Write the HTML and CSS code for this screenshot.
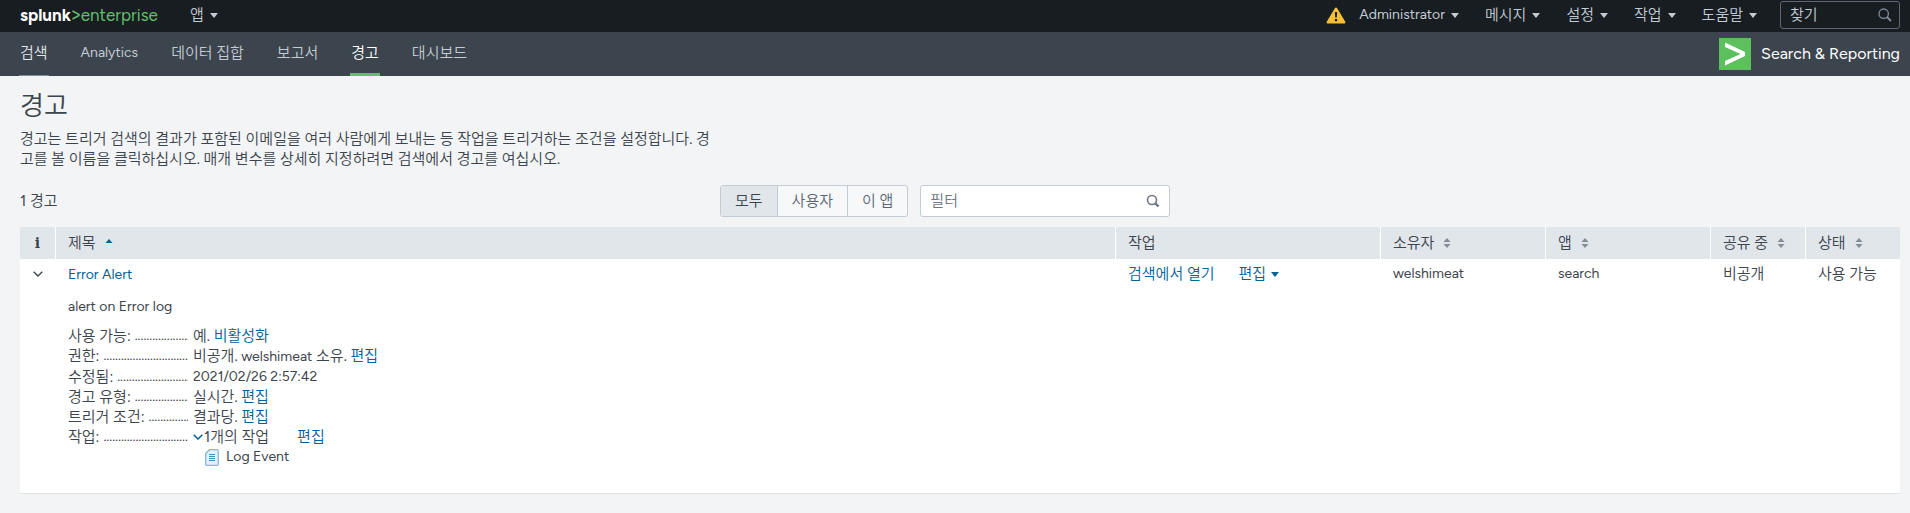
FILE: index.html
```html
<!DOCTYPE html>
<html lang="ko">
<head>
<meta charset="utf-8">
<title>경고 | Splunk</title>
<link rel="stylesheet" href="styles.css">
</head>
<body>
<header class="topbar">
  <a class="logo" href="#" aria-label="splunk enterprise"><span class="logo-name">splunk</span><svg class="logo-mark" width="8" height="10" viewBox="0 0 8 10"><path d="M.5 1 7 4.500v1L.5 9" fill="none" stroke="currentColor" stroke-width="1.500"/></svg><span class="logo-product">enterprise</span></a>
  <button class="menu" type="button">앱<span class="caret"></span></button>
  <nav class="top-menus">
    <svg class="warning" width="20" height="17" viewBox="0 0 20 17"><path d="M10 .5Q10.800.5 11.300 1.400L19.300 14.800Q20 16.500 18.500 16.500H1.500Q0 16.500.7 14.800L8.700 1.400Q9.200.5 10 .5Z" fill="#f8be34"/><path d="M8.800 5h2.400l-.4 5.500H9.200ZM8.900 12h2.200v2.200H8.900Z" fill="#1a1c20"/></svg>
    <button class="menu menu-latin" type="button">Administrator<span class="caret"></span></button>
    <button class="menu" type="button">메시지<span class="caret"></span></button>
    <button class="menu" type="button">설정<span class="caret"></span></button>
    <button class="menu" type="button">작업<span class="caret"></span></button>
    <button class="menu" type="button">도움말<span class="caret"></span></button>
  </nav>
  <label class="find">
    <input type="text" placeholder="찾기" aria-label="찾기">
    <svg width="14" height="14" viewBox="0 0 14 14" fill="none" stroke="currentColor"><circle cx="5.700" cy="5.700" r="4.700" stroke-width="1.300"/><path d="m9 9 4 4" stroke-width="2"/></svg>
  </label>
</header>
<nav class="appbar">
  <div class="tabs">
    <a class="tab tab-home" href="#">검색</a>
    <a class="tab tab-latin" href="#">Analytics</a>
    <a class="tab" href="#">데이터 집합</a>
    <a class="tab" href="#">보고서</a>
    <a class="tab tab-active" href="#" aria-current="page">경고</a>
    <a class="tab" href="#">대시보드</a>
  </div>
  <a class="app" href="#"><svg width="32" height="32" viewBox="0 0 32 32"><path fill="#5cc05c" d="M0 0h32v32H0z"/><path d="M6 4.500 26 14v4L6 27.500V23l15.500-7L6 9Z" fill="#fff"/></svg>Search &amp; Reporting</a>
</nav>
<main class="page">
  <h1>경고</h1>
  <p class="intro">경고는 트리거 검색의 결과가 포함된 이메일을 여러 사람에게 보내는 등 작업을 트리거하는 조건을 설정합니다. 경고를 볼 이름을 클릭하십시오. 매개 변수를 상세히 지정하려면 검색에서 경고를 여십시오.</p>
  <div class="toolbar">
    <div class="count">1 경고</div>
    <div class="segments">
      <button class="segment segment-on" type="button" aria-pressed="true">모두</button>
      <button class="segment" type="button">사용자</button>
      <button class="segment" type="button">이 앱</button>
    </div>
    <label class="filter">
      <input type="text" placeholder="필터" aria-label="필터">
      <svg width="14" height="14" viewBox="0 0 14 14" fill="none" stroke="currentColor"><circle cx="6" cy="6" r="4.500" stroke-width="1.600"/><path d="m9.200 9.200 3.300 3.300" stroke-width="2.400"/></svg>
    </label>
  </div>
  <table class="alerts">
    <colgroup><col class="col-info"><col><col class="col-actions"><col class="col-owner"><col class="col-owner"><col class="col-state"><col class="col-state"></colgroup>
    <thead>
      <tr>
        <th class="info">i</th>
        <th>제목<svg class="sort sort-up" width="8" height="10" viewBox="0 0 8 10"><path d="m.5 5 3.500-4 3.500 4Z" fill="currentColor"/></svg></th>
        <th>작업</th>
        <th>소유자<svg class="sort" width="8" height="10" viewBox="0 0 8 10"><path d="m.5 4 3.500-4 3.500 4ZM.5 6 4 10l3.500-4Z" fill="currentColor"/></svg></th>
        <th>앱<svg class="sort" width="8" height="10" viewBox="0 0 8 10"><path d="m.5 4 3.500-4 3.500 4ZM.5 6 4 10l3.500-4Z" fill="currentColor"/></svg></th>
        <th>공유 중<svg class="sort" width="8" height="10" viewBox="0 0 8 10"><path d="m.5 4 3.500-4 3.500 4ZM.5 6 4 10l3.500-4Z" fill="currentColor"/></svg></th>
        <th>상태<svg class="sort" width="8" height="10" viewBox="0 0 8 10"><path d="m.5 4 3.500-4 3.500 4ZM.5 6 4 10l3.500-4Z" fill="currentColor"/></svg></th>
      </tr>
    </thead>
    <tbody>
      <tr>
        <td class="toggle"><button type="button" aria-label="접기"><svg width="10" height="6" viewBox="0 0 10 6"><path d="m.7.700 4.300 4.300L9.300.7" fill="none" stroke="currentColor" stroke-width="1.300"/></svg></button></td>
        <td><a class="latin" href="#">Error Alert</a></td>
        <td><div class="actions"><a href="#">검색에서 열기</a><button class="edit" type="button">편집<span class="caret"></span></button></div></td>
        <td class="latin">welshimeat</td>
        <td class="latin">search</td>
        <td>비공개</td>
        <td>사용 가능</td>
      </tr>
      <tr>
        <td></td>
        <td class="detail" colspan="6">
          <p class="summary latin">alert on Error log</p>
          <dl class="facts">
            <dt>사용 가능:</dt><dd>예. <a href="#">비활성화</a></dd>
            <dt>권한:</dt><dd>비공개. <span class="latin">welshimeat</span> 소유. <a href="#">편집</a></dd>
            <dt>수정됨:</dt><dd class="latin">2021/02/26 2:57:42</dd>
            <dt>경고 유형:</dt><dd>실시간. <a href="#">편집</a></dd>
            <dt>트리거 조건:</dt><dd>결과당. <a href="#">편집</a></dd>
            <dt>작업:</dt>
            <dd>
              <div class="action-line"><a href="#" aria-label="접기"><svg width="10" height="6" viewBox="0 0 10 6"><path d="m.7.700 4.300 4.300L9.300.7" fill="none" stroke="currentColor" stroke-width="1.500"/></svg></a><span>1개의 작업</span><a class="action-edit" href="#">편집</a></div>
              <div class="action-item latin"><svg width="14" height="17" viewBox="0 0 14 17"><path d="M4.500.7H12Q13.300.7 13.300 2V15Q13.300 16.300 12 16.300H2Q.7 16.300.7 15V4.500Z" fill="#e3f2fa" stroke="#7fb9d6" stroke-width="1.300"/><path d="M4 5.500h6M4 7.500h6M4 9.500h6M4 11.500h6" stroke="#3f8fb8"/></svg>Log Event</div>
            </dd>
          </dl>
        </td>
      </tr>
    </tbody>
  </table>
</main>
</body>
</html>
```

FILE: styles.css
```css
* { box-sizing: border-box; }

body {
  margin: 0;
  background: #f2f4f5;
  color: #3c444d;
  font: 15px/20px Figtree, "Proxima Nova", Lato, "Noto Sans CJK KR DemiLight", "Noto Sans CJK KR", sans-serif;
  font-weight: 400;
}

a { color: #006297; text-decoration: none; }
button, input { font: inherit; color: inherit; }
button { padding: 0; border: 0; background: none; }
svg { display: block; flex: none; }
.latin { font-size: 14px; }

.caret {
  border: 4px solid transparent;
  border-top: 5px solid currentColor;
  border-bottom: 0;
}

.topbar {
  display: flex;
  align-items: center;
  height: 32px;
  padding: 0 10px 2px 20px;
  background: #171d21;
  color: #c3cbd4;
}

.logo {
  display: flex;
  align-items: center;
  gap: 1px;
  margin-right: 32px;
  color: #65be6c;
  font-size: 17px;
}
.logo-name { color: #fff; font-weight: 700; }

.menu {
  display: flex;
  align-items: center;
  gap: 6px;
  height: 24px;
}
.menu-latin { font-size: 14px; }

.top-menus {
  display: flex;
  align-items: center;
  gap: 26px;
  margin-left: auto;
  margin-right: 23px;
}
.warning { margin-right: -13px; }

.find {
  display: flex;
  align-items: center;
  width: 120px;
  height: 28px;
  padding: 0 7px 0 9px;
  border: 1px solid #5c6773;
  border-radius: 3px;
  color: #818d99;
}
.find input, .filter input {
  flex: 1;
  min-width: 0;
  padding: 0;
  border: 0;
  outline: 0;
  background: none;
}
.find input::placeholder { color: #c3cbd4; opacity: 1; }

.appbar {
  display: flex;
  justify-content: space-between;
  height: 44px;
  padding: 0 10px 0 19px;
  background: #3c444d;
}
.tabs { display: flex; gap: 31px; }
.tab {
  padding: 11px 1px 0;
  border-bottom: 3px solid transparent;
  color: #c3cbd4;
}
.tab-home { border-bottom: 1px solid #818d99; color: #e1e6eb; }
.tab-latin { font-size: 14px; }
.tab-active { border-color: #65be6c; color: #fff; }
.app {
  display: flex;
  align-items: center;
  gap: 10px;
  color: #fff;
  font-size: 16px;
}

.page { padding: 13px 10px 18px 20px; }
h1 {
  margin: 0;
  font-size: 26px;
  font-weight: 400;
  line-height: 34px;
}
.intro {
  max-width: 700px;
  margin: 6px 0 16px;
  word-break: break-all;
}

.toolbar {
  display: flex;
  align-items: center;
  margin-bottom: 10px;
}
.count { flex: 0 0 700px; }
.segments {
  display: flex;
  height: 32px;
  margin-right: 12px;
  border: 1px solid #c3cbd4;
  border-radius: 3px;
  background: #f7f8fa;
  color: #5c6773;
}
.segment { padding: 0 14px; }
.segment + .segment { border-left: 1px solid #c3cbd4; }
.segment-on { background: #e1e6eb; color: #3c444d; }
.filter {
  display: flex;
  align-items: center;
  width: 250px;
  height: 32px;
  padding: 0 9px;
  border: 1px solid #c3cbd4;
  border-radius: 3px;
  background: #fff;
  color: #6b7785;
}
.filter input::placeholder { color: #6b7785; opacity: 1; }

.alerts {
  width: 100%;
  table-layout: fixed;
  border-spacing: 0;
  background: #fff;
  border-bottom: 1px solid #e1e3e6;
}
.col-info { width: 35px; }
.col-actions { width: 265px; }
.col-owner { width: 165px; }
.col-state { width: 95px; }
th {
  height: 32px;
  padding: 0 12px;
  border-left: 1px solid #fff;
  background: #e1e6eb;
  font-weight: 400;
  text-align: left;
}
th:first-child { border-left: 0; }
.info {
  padding: 0;
  font: 700 14px/20px "DejaVu Serif", serif;
  text-align: center;
}
.sort {
  display: inline-block;
  margin-left: 9px;
  color: #818d99;
}
.sort-up { color: #006297; }
td { height: 32px; padding: 5px 12px 7px 13px; vertical-align: top; }
.toggle { padding: 12px 0 0; }
.toggle button { display: block; margin: 0 auto; }

.actions { display: flex; gap: 24px; }
.edit {
  display: flex;
  align-items: center;
  gap: 5px;
  color: #006297;
}

.detail { padding: 5px 13px 26px; }
.summary { margin: 0 0 9px; }
.facts {
  display: grid;
  grid-template-columns: 120px 1fr;
  column-gap: 5px;
  margin: 0;
}
dt { display: flex; gap: 4px; overflow: hidden; height: 20px; white-space: nowrap; }
dt::after {
  content: "................................................";
  flex: 1;
  min-width: 0;
  overflow: hidden;
  font-size: 14px;
}
dd { margin: 0; }
.action-line { display: flex; align-items: center; gap: 1px; }
.action-edit { margin-left: 27px; }
.action-item {
  display: flex;
  align-items: center;
  gap: 7px;
  padding-left: 12px;
}
```
